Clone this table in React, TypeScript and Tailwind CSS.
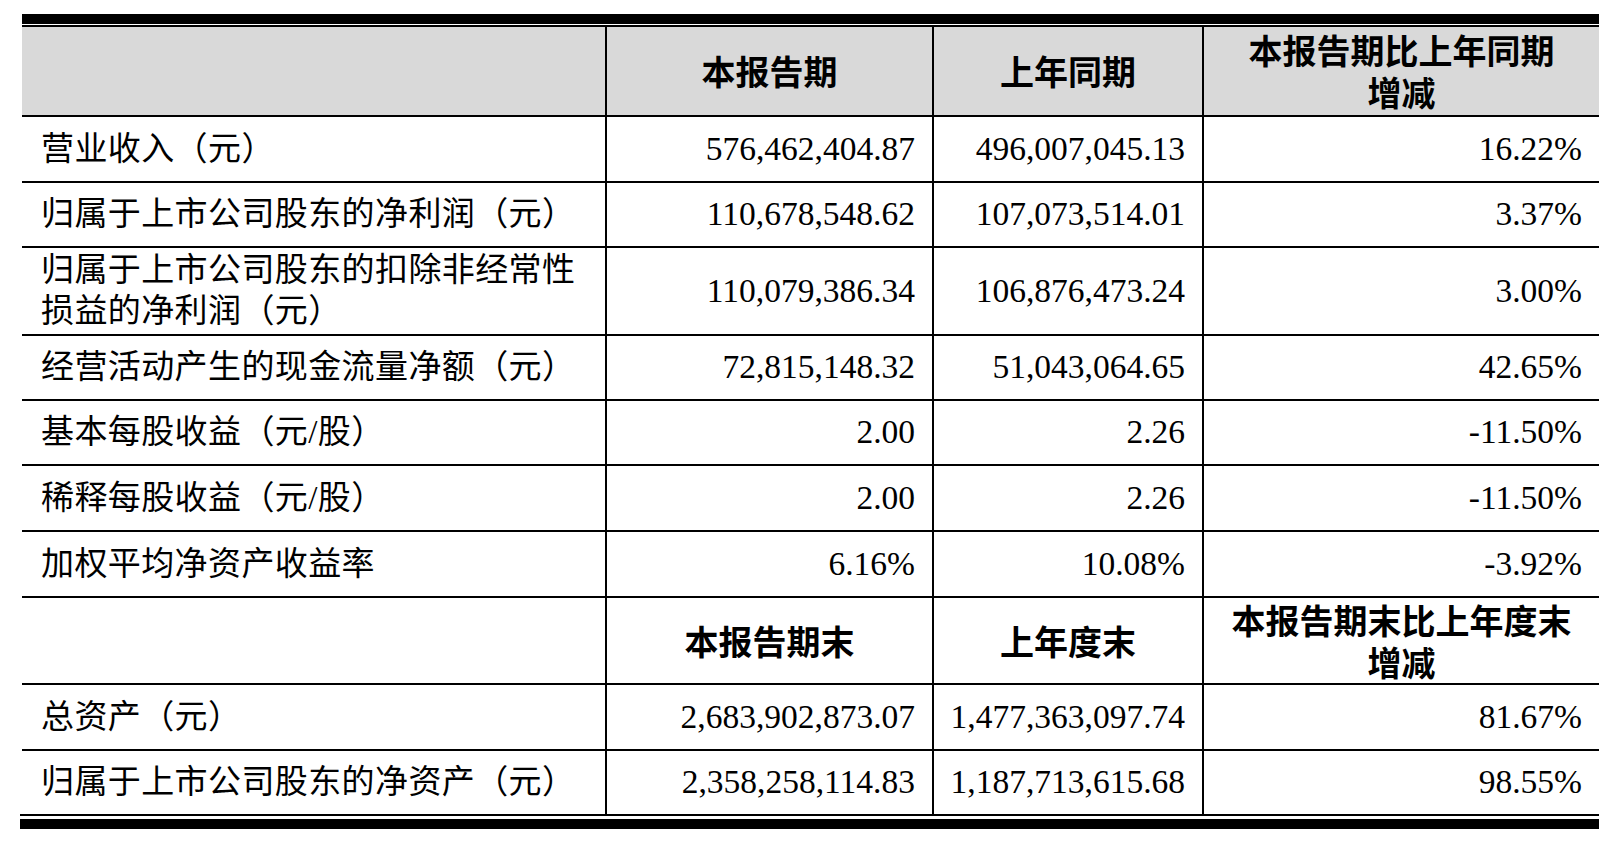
const serif = "font-['Liberation_Serif','Noto_Sans_CJK_SC',serif]";
const head = "font-['Noto_Sans_CJK_SC',sans-serif] font-bold";

type Row = { label: string[]; cur: string; prev: string; change: string; h: string };

const periodRows: Row[] = [
  { label: ["营业收入（元）"], cur: "576,462,404.87", prev: "496,007,045.13", change: "16.22%", h: "h-[64px]" },
  { label: ["归属于上市公司股东的净利润（元）"], cur: "110,678,548.62", prev: "107,073,514.01", change: "3.37%", h: "h-[63px]" },
  {
    label: ["归属于上市公司股东的扣除非经常性", "损益的净利润（元）"],
    cur: "110,079,386.34",
    prev: "106,876,473.24",
    change: "3.00%",
    h: "h-[86px]",
  },
  { label: ["经营活动产生的现金流量净额（元）"], cur: "72,815,148.32", prev: "51,043,064.65", change: "42.65%", h: "h-[63px]" },
  { label: ["基本每股收益（元/股）"], cur: "2.00", prev: "2.26", change: "-11.50%", h: "h-[63px]" },
  { label: ["稀释每股收益（元/股）"], cur: "2.00", prev: "2.26", change: "-11.50%", h: "h-[64px]" },
  { label: ["加权平均净资产收益率"], cur: "6.16%", prev: "10.08%", change: "-3.92%", h: "h-[64px]" },
];

const balanceRows: Row[] = [
  { label: ["总资产（元）"], cur: "2,683,902,873.07", prev: "1,477,363,097.74", change: "81.67%", h: "h-[64px]" },
  { label: ["归属于上市公司股东的净资产（元）"], cur: "2,358,258,114.83", prev: "1,187,713,615.68", change: "98.55%", h: "h-[63px]" },
];

function HeaderRow({ cols, gray, h }: { cols: string[][]; gray?: boolean; h: string }) {
  const bg = gray ? "bg-[#d9d9d9]" : "bg-white";
  return (
    <>
      <div className={`${bg} ${h}`} />
      {cols.map((lines, i) => (
        <div
          key={i}
          className={`${bg} ${h} ${head} flex flex-col items-center justify-center text-center text-[34px] leading-[42px] text-black`}
        >
          {lines.map((l) => (
            <span key={l}>{l}</span>
          ))}
        </div>
      ))}
    </>
  );
}

function DataRow({ row }: { row: Row }) {
  const num = `bg-white ${row.h} ${serif} flex items-center justify-end pr-[17px] text-[33.5px] text-black`;
  return (
    <>
      <div className={`bg-white ${row.h} ${serif} flex flex-col justify-center pl-[19px] text-[33px] tracking-[0.4px] leading-[41px] text-black`}>
        {row.label.map((l) => (
          <span key={l} className="whitespace-nowrap">
            {l}
          </span>
        ))}
      </div>
      <div className={num}>{row.cur}</div>
      <div className={num}>{row.prev}</div>
      <div className={num}>{row.change}</div>
    </>
  );
}

export default function App() {
  return (
    <div className="w-[1622px] h-[842px] bg-white pt-[14px]">
      <div className="ml-[22px] w-[1577px]">
        <div className="h-[10px] bg-black" />
        <div className="h-px" />
        <div className="h-[2px] bg-black" />
        <div className="grid grid-cols-[583px_325px_268px_395px] gap-[2px] bg-black">
          <HeaderRow
            gray
            h="h-[88px]"
            cols={[["本报告期"], ["上年同期"], ["本报告期比上年同期", "增减"]]}
          />
          {periodRows.map((r) => (
            <DataRow key={r.label[0]} row={r} />
          ))}
          <HeaderRow h="h-[85px]" cols={[["本报告期末"], ["上年度末"], ["本报告期末比上年度末", "增减"]]} />
          {balanceRows.map((r) => (
            <DataRow key={r.label[0]} row={r} />
          ))}
        </div>
      </div>
      <div className="ml-[20px] w-[1579px]">
        <div className="h-[2px] bg-black" />
        <div className="h-[3px]" />
        <div className="h-[10px] bg-black" />
      </div>
    </div>
  );
}
